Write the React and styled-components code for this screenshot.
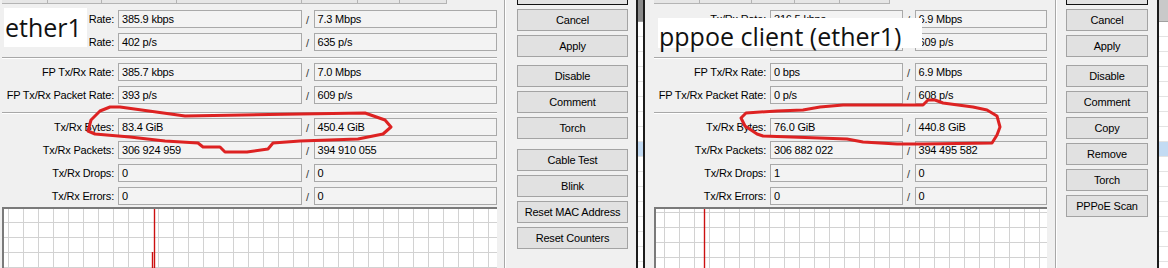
import React from 'react';
import styled, { createGlobalStyle } from 'styled-components';

const GlobalStyle = createGlobalStyle`
  html, body {
    margin: 0;
    padding: 0;
  }
  body {
    width: 1168px;
    height: 268px;
    overflow: hidden;
    background: #f0f0f0;
    font-family: 'Liberation Sans', Arial, sans-serif;
    font-size: 11px;
    letter-spacing: -0.2px;
    color: #000;
  }
`

const Page = styled.div`
  position: relative;
  display: flex;
  width: 1168px;
  height: 268px;
  overflow: hidden;
`

const Window = styled.div`
  display: flex;
  flex: 0 0 ${p => p.$width}px;
  box-sizing: border-box;
  height: 268px;
  padding-left: ${p => p.$padLeft}px;
  background: #f0f0f0;
  border-left: ${p => (p.$borderLeft ? '2px solid #1c1c1c' : 'none')};
  border-right: 2px solid #1c1c1c;
  overflow: hidden;
`

const Form = styled.div`
  display: flex;
  flex-direction: column;
  flex: 0 0 ${p => p.$width}px;
`

const TabStrip = styled.div`
  display: flex;
  height: 4px;
  margin-bottom: 6px;
`

const Tab = styled.div`
  flex: 0 0 ${p => p.$width}px;
  box-sizing: border-box;
  background: #e6e6e6;
  border-right: 1px solid #b4b4b4;
  border-bottom: 1px solid #b4b4b4;
`

const Group = styled.div`
  display: flex;
  flex-direction: column;
  gap: 5px;
`

const Separator = styled.div`
  margin: ${p => p.$top}px 0 4px;
  border-top: 1px solid #a8a8a8;
  border-bottom: 1px solid #ffffff;
`

const Row = styled.div`
  display: flex;
  align-items: center;
  height: 18px;
`

const Label = styled.div`
  flex: 0 0 116px;
  box-sizing: border-box;
  padding-right: 4px;
  text-align: right;
  white-space: nowrap;
`

const Field = styled.div`
  flex: 1;
  height: 18px;
  box-sizing: border-box;
  padding-left: 3px;
  line-height: 16px;
  background: #f3f3f3;
  border: 1px solid #a9a9a9;
  white-space: nowrap;
  overflow: hidden;
`

const Slash = styled.div`
  flex: 0 0 12px;
  text-align: center;
  color: #3a3a3a;
  padding-top: 2px;
`

const Graph = styled.div`
  position: relative;
  flex: 1;
  margin-top: 2px;
  background-color: #ffffff;
  background-image:
    linear-gradient(#d2d2d2 1px, transparent 1px),
    linear-gradient(90deg, #d2d2d2 1px, transparent 1px);
  background-size: 15px 15px;
  background-position: ${p => p.$gx}px ${p => p.$gy}px;
  border-top: 2px solid #7a7a7a;
  border-left: 2px solid #7a7a7a;
  overflow: hidden;
`

const Spikes = styled.svg`
  position: absolute;
  inset: 0;
  width: 100%;
  height: 100%;
`

const Divider = styled.div`
  flex: 0 0 auto;
  margin-left: ${p => p.$gap}px;
  border-left: 1px solid #a8a8a8;
  border-right: 1px solid #ffffff;
`

const ButtonColumn = styled.div`
  display: flex;
  flex-direction: column;
  flex: 0 0 ${p => p.$width}px;
  margin-left: ${p => p.$gap}px;
`

const ButtonGroup = styled.div`
  display: flex;
  flex-direction: column;
  gap: 4px;
  margin-top: ${p => p.$top}px;
`

const Button = styled.div`
  height: 22px;
  box-sizing: border-box;
  display: flex;
  align-items: center;
  justify-content: center;
  background: #e1e1e1;
  border: 1px solid ${p => (p.$default ? '#111111' : '#a3a3a3')};
  margin-top: ${p => (p.$default ? '-17px' : '0')};
  white-space: nowrap;
`

const ListStrip = styled.div`
  display: flex;
  flex-direction: column;
  flex: 0 0 ${p => p.$width}px;
  background: #ffffff;
  overflow: hidden;
`

const ListHeader = styled.div`
  flex: 0 0 22px;
  background: ${p => p.$shade};
  border-bottom: 1px solid #a0a0a0;
  box-sizing: border-box;
`

const ListRow = styled.div`
  flex: 0 0 15px;
  box-sizing: border-box;
  background: ${p => (p.$selected ? '#c3dbf3' : '#ffffff')};
  border-bottom: 1px solid #e3e3e3;
`

const Caption = styled.div`
  position: absolute;
  left: ${p => p.$x}px;
  top: ${p => p.$y}px;
  width: ${p => p.$w}px;
  height: ${p => p.$h}px;
  box-sizing: border-box;
  padding: ${p => p.$padTop}px 0 0 1px;
  background: #ffffff;
  font-family: 'Open Sans', 'Noto Sans', sans-serif;
  font-size: 25px;
  letter-spacing: 0;
  line-height: ${p => p.$lh}px;
  color: #111;
  white-space: nowrap;
`

const Marks = styled.svg`
  position: absolute;
  left: 0;
  top: 0;
  width: 1168px;
  height: 268px;
  pointer-events: none;
`

const ether = {
  tabs: [46, 54, 75, 125, 56, 42, 47],
  groups: [
    [
      ['Tx/Rx Rate:', '385.9 kbps', '7.3 Mbps'],
      ['Tx/Rx Packet Rate:', '402 p/s', '635 p/s'],
    ],
    [
      ['FP Tx/Rx Rate:', '385.7 kbps', '7.0 Mbps'],
      ['FP Tx/Rx Packet Rate:', '393 p/s', '609 p/s'],
    ],
    [
      ['Tx/Rx Bytes:', '83.4 GiB', '450.4 GiB'],
      ['Tx/Rx Packets:', '306 924 959', '394 910 055'],
      ['Tx/Rx Drops:', '0', '0'],
      ['Tx/Rx Errors:', '0', '0'],
    ],
  ],
  buttons: [
    { top: 0, items: ['OK', 'Cancel', 'Apply'] },
    { top: 8, items: ['Disable', 'Comment', 'Torch'] },
    { top: 10, items: ['Cable Test', 'Blink', 'Reset MAC Address', 'Reset Counters'] },
  ],
  spikes: [
    { x: 150, y: 0 },
    { x: 148, y: 43 },
  ],
}

const pppoe = {
  tabs: [46, 52, 43, 45, 50],
  groups: [
    [
      ['Tx/Rx Rate:', '316.5 kbps', '6.9 Mbps'],
      ['Tx/Rx Packet Rate:', '398 p/s', '609 p/s'],
    ],
    [
      ['FP Tx/Rx Rate:', '0 bps', '6.9 Mbps'],
      ['FP Tx/Rx Packet Rate:', '0 p/s', '608 p/s'],
    ],
    [
      ['Tx/Rx Bytes:', '76.0 GiB', '440.8 GiB'],
      ['Tx/Rx Packets:', '306 882 022', '394 495 582'],
      ['Tx/Rx Drops:', '1', '0'],
      ['Tx/Rx Errors:', '0', '0'],
    ],
  ],
  buttons: [
    { top: 0, items: ['OK', 'Cancel', 'Apply'] },
    { top: 8, items: ['Disable', 'Comment', 'Copy', 'Remove', 'Torch', 'PPPoE Scan'] },
  ],
  spikes: [{ x: 48, y: 0 }],
}

const separatorTops = [6, 8]

const StatsForm = ({ data, width, gx, gy }) => (
  <Form $width={width}>
    <TabStrip>
      {data.tabs.map((w, i) => <Tab key={i} $width={w} />)}
    </TabStrip>
    {data.groups.map((group, gi) => (
      <React.Fragment key={gi}>
        {gi > 0 && <Separator $top={separatorTops[gi - 1]} />}
        <Group>
          {group.map(([label, tx, rx]) => (
            <Row key={label}>
              <Label>{label}</Label>
              <Field>{tx}</Field>
              <Slash>/</Slash>
              <Field>{rx}</Field>
            </Row>
          ))}
        </Group>
      </React.Fragment>
    ))}
    <Graph $gx={gx} $gy={gy}>
      <Spikes>
        {data.spikes.map((s, i) => (
          <line key={i} x1={s.x + 0.5} y1={s.y} x2={s.x + 0.5} y2="80" stroke="#cc1010" strokeWidth="1.4" />
        ))}
      </Spikes>
    </Graph>
  </Form>
)

const Buttons = ({ groups, width, gap }) => (
  <ButtonColumn $width={width} $gap={gap}>
    {groups.map((g, gi) => (
      <ButtonGroup key={gi} $top={g.top}>
        {g.items.map(name => (
          <Button key={name} $default={name === 'OK'}>{name === 'OK' ? '' : name}</Button>
        ))}
      </ButtonGroup>
    ))}
  </ButtonColumn>
)

const BackList = ({ width, shade }) => (
  <ListStrip $width={width}>
    <ListHeader $shade={shade} />
    {Array.from({ length: 17 }).map((_, i) => (
      <ListRow key={i} $selected={i === 8} />
    ))}
  </ListStrip>
)

const leftMark =
  'M120,107 L185,116 L300,114 L365,113 L385,120 L391,127 L383,134 L358,139 L300,141 L273,143 L268,149 L247,152 L225,152 L220,147 L203,147 L198,143 L165,141 L130,137 L95,134 L88,131 L91,120 L100,111 L110,107 Z'

const rightMark =
  'M757,134 L745,126 L741,118 L746,113 L777,111 L803,110 L820,107 L843,105 L923,105 L928,100 L935,100 L943,103 L973,107 L987,110 L997,116 L1000,127 L997,135 L992,143 L923,144 L897,144 L863,142 L847,139 L763,136 Z'

const App = () => (
  <>
    <GlobalStyle />
    <Page>
      <Window $width={638} $padLeft={2}>
        <StatsForm data={ether} width={495} gx={4} gy={13} />
        <Divider $gap={7} />
        <Buttons groups={ether.buttons} width={111} gap={11} />
      </Window>
      <BackList width={5} shade="#8a8a8a" />
      <Window $width={516} $padLeft={9} $borderLeft>
        <StatsForm data={pppoe} width={393} gx={8} gy={3} />
        <Divider $gap={8} />
        <Buttons groups={pppoe.buttons} width={82} gap={9} />
      </Window>
      <BackList width={9} shade="#c9c9c9" />

      <Caption $x={4} $y={8} $w={83} $h={39} $lh={39} $padTop={0}>ether1</Caption>
      <Caption $x={658} $y={18} $w={264} $h={30} $lh={30} $padTop={3}>pppoe client (ether1)</Caption>

      <Marks viewBox="0 0 1168 268">
        <path d={leftMark} fill="none" stroke="#dd2222" strokeWidth="3" strokeLinejoin="round" />
        <path d={rightMark} fill="none" stroke="#dd2222" strokeWidth="3" strokeLinejoin="round" />
      </Marks>
    </Page>
  </>
)

export default App
